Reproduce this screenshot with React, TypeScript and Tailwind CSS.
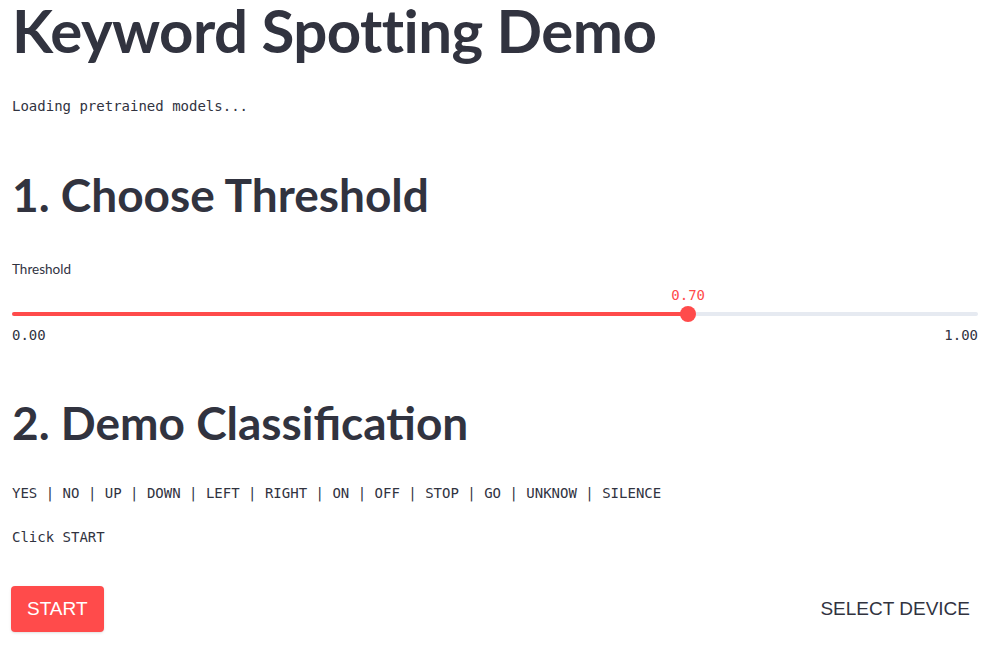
const keywords = ['YES', 'NO', 'UP', 'DOWN', 'LEFT', 'RIGHT', 'ON', 'OFF', 'STOP', 'GO', 'UNKNOW', 'SILENCE'];

const sans = "font-['Lato','Noto_Sans',sans-serif]";
const mono = "font-['DejaVu_Sans_Mono',monospace]";

function Slider({ value }: { value: number }) {
    const pct = value * 100;
    return (
        <div className="w-full">
            <div className={`${mono} relative h-[25px] text-[14px] text-[#ff4b4b]`}>
                <span className="absolute top-[4px] -translate-x-1/2" style={{ left: `${pct}%` }}>
                    {value.toFixed(2)}
                </span>
            </div>
            <div className="relative h-4 flex items-center">
                <div className="w-full h-1 rounded-full bg-[#e6eaf1] flex">
                    <div className="h-1 rounded-full bg-[#ff4b4b]" style={{ width: `${pct}%` }} />
                </div>
                <div
                    className="absolute top-0 w-4 h-4 -translate-x-1/2 rounded-full bg-[#ff4b4b]"
                    style={{ left: `${pct}%` }}
                />
            </div>
            <div className={`${mono} flex justify-between text-[14px] text-[#31333f] mt-[3px]`}>
                <span>0.00</span>
                <span>1.00</span>
            </div>
        </div>
    );
}

export default function App() {
    return (
        <div className="min-h-screen bg-white text-[#31333f] pl-3 pr-[22px] pt-0">
            <h1 className={`${sans} text-[60px] font-bold leading-[60px] tracking-[-0.57px]`}>Keyword Spotting Demo</h1>

            <p className={`${mono} text-[14px] mt-[36px] leading-5`}>Loading pretrained models...</p>

            <h2 className={`${sans} text-[46px] font-bold leading-[56px] mt-[51px]`}>1. Choose Threshold</h2>

            <label className={`${sans} block text-[13.5px] mt-[36px]`}>Threshold</label>
            <div className="mt-[2px]">
                <Slider value={0.7} />
            </div>

            <h2 className={`${sans} text-[46px] font-bold leading-[56px] mt-[49px]`}>2. Demo Classification</h2>

            <p className={`${mono} text-[14px] mt-[32px] leading-5`}>
                {keywords.map((k, i) => (
                    <span key={k}>
                        {k}
                        {i < keywords.length - 1 && ' | '}
                    </span>
                ))}
            </p>

            <p className={`${mono} text-[14px] mt-[24px] leading-5`}>Click START</p>

            <div className="flex items-center justify-between mt-[39px]">
                <button className="font-['Liberation_Sans',Arial,sans-serif] text-[19px] text-white bg-[#ff4b4b] rounded h-[46px] px-[16px] shadow-sm -ml-px">
                    START
                </button>
                <button className="font-['Liberation_Sans',Arial,sans-serif] text-[19px] text-[#31333f] h-[46px] px-2">
                    SELECT DEVICE
                </button>
            </div>
        </div>
    );
}
